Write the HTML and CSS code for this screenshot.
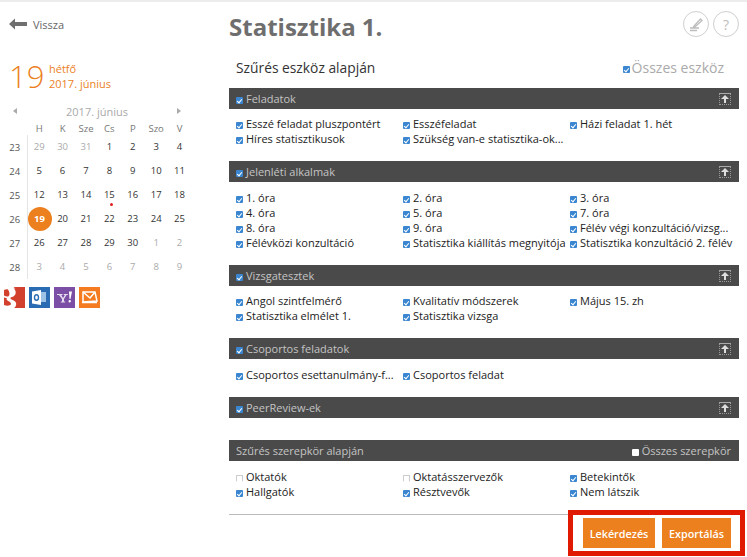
FILE: index.html
```html
<!DOCTYPE html>
<html lang="hu">
<head>
<meta charset="utf-8">
<title>Statisztika 1.</title>
<link rel="stylesheet" href="styles.css">
</head>
<body>
<div class="topstrip"></div>
<div class="page">
  <aside class="side">
    <a class="back">
      <svg width="18" height="12" viewBox="0 0 18 12"><path d="M0 6 L6 0.5 V4 H18 V8 H6 V11.5 Z" fill="#6f6f6f"/></svg>
      <span>Vissza</span>
    </a>
    <div class="today">
      <div class="today-num">19</div>
      <div class="today-txt"><div>hétfő</div><div>2017. június</div></div>
    </div>
    <div class="cal-title">
      <span class="tri-l"></span><span>2017. június</span><span class="tri-r"></span>
    </div>
    <div class="cal">
      <span></span><b>H</b><b>K</b><b>Sze</b><b>Cs</b><b>P</b><b>Szo</b><b>V</b>
      <i>23</i><span class="o">29</span><span class="o">30</span><span class="o">31</span><span>1</span><span>2</span><span>3</span><span>4</span>
      <i>24</i><span>5</span><span>6</span><span>7</span><span>8</span><span>9</span><span>10</span><span>11</span>
      <i>25</i><span>12</span><span>13</span><span>14</span><span class="ev">15</span><span>16</span><span>17</span><span>18</span>
      <i>26</i><span class="cur"><em>19</em></span><span>20</span><span>21</span><span>22</span><span>23</span><span>24</span><span>25</span>
      <i>27</i><span>26</span><span>27</span><span>28</span><span>29</span><span>30</span><span class="o">1</span><span class="o">2</span>
      <i>28</i><span class="o">3</span><span class="o">4</span><span class="o">5</span><span class="o">6</span><span class="o">7</span><span class="o">8</span><span class="o">9</span>
    </div>
    <div class="apps">
      <div class="app g"><svg width="21" height="21" viewBox="0 0 21 21"><path d="M0 0h9.500l2 1.500H9.500c1.600 1 2.200 2.400 2.200 4 0 3-2.600 4.400-4.500 4.800-1 .3-1 1.400 0 1.900 2 1.100 5 2 5 4.800 0 1.500-.7 3-2.200 4H0v-3c2.500 1 6.500 1 7-1 .2-1.500-2-2.700-3.500-3.500-1.500-.9-1-2-.5-2.500-1.300 0-3-.4-3-.8V8.500c1.500 1 3.800 1.500 4.800.5 1.200-1.300.8-4.500-.8-6.500C3.600 2 1.500 2 0 3z" fill="#fff"/></svg></div>
      <div class="app ol"><svg width="21" height="21" viewBox="0 0 21 21"><path d="M11 5h6v10h-6z" fill="#9cc3e6"/><path d="M3 4.500 12 3v15l-9-1.500z" fill="#fff"/><ellipse cx="7.500" cy="10.500" rx="2" ry="2.800" fill="none" stroke="#2a6cb3" stroke-width="1.400"/></svg></div>
      <div class="app y"><svg width="21" height="21" viewBox="0 0 21 21"><path d="M3 7h5.500v1H7.300l1.700 3 1.800-3H9.800V7h4v1h-1.300L10 12v2.500h1.200v1H6.800v-1H8V12L5 8H3z" fill="#e4dcef"/><path d="M15 4.500h3l-1.500 7.500h-1zM15.800 13a1.200 1.200 0 1 1-.1 2.400 1.200 1.200 0 0 1 .1-2.400z" fill="#fff"/></svg></div>
      <div class="app m"><svg width="21" height="21" viewBox="0 0 21 21"><path d="M4 5h12l2 9-14 1z" fill="none" stroke="#fff" stroke-width="1.500"/><path d="M4 5l7 6 5-6" fill="none" stroke="#fff" stroke-width="1.500"/><path d="M3 15.500h15" stroke="#fff" stroke-width="1.500"/></svg></div>
    </div>
  </aside>

  <main class="main">
    <header class="head">
      <h1>Statisztika 1.</h1>
      <div class="round-btns">
        <span class="round"><svg width="18" height="18" viewBox="0 0 18 18"><path d="M7.500 10.500l6-6.500 1.500 1.500-6.500 6-2 .5zM3 13h9M3 15.500h7" fill="none" stroke="#bdbdbd" stroke-width="1.300"/></svg></span>
        <span class="round q">?</span>
      </div>
    </header>

    <div class="filter-head">
      <h2>Szűrés eszköz alapján</h2>
      <div class="all"><span class="cb"></span>Összes eszköz</div>
    </div>

    <section class="grp">
      <div class="bar"><span class="bar-l"><span class="cb"></span>Feladatok</span><span class="up"></span></div>
      <ul class="items">
        <li><span class="cb"></span>Esszé feladat pluszpontért</li>
        <li><span class="cb"></span>Esszéfeladat</li>
        <li><span class="cb"></span>Házi feladat 1. hét</li>
        <li><span class="cb"></span>Híres statisztikusok</li>
        <li><span class="cb"></span>Szükség van-e statisztika-ok...</li>
      </ul>
    </section>

    <section class="grp">
      <div class="bar"><span class="bar-l"><span class="cb"></span>Jelenléti alkalmak</span><span class="up"></span></div>
      <ul class="items items-low">
        <li><span class="cb"></span>1. óra</li>
        <li><span class="cb"></span>2. óra</li>
        <li><span class="cb"></span>3. óra</li>
        <li><span class="cb"></span>4. óra</li>
        <li><span class="cb"></span>5. óra</li>
        <li><span class="cb"></span>7. óra</li>
        <li><span class="cb"></span>8. óra</li>
        <li><span class="cb"></span>9. óra</li>
        <li><span class="cb"></span>Félév végi konzultáció/vizsg...</li>
        <li><span class="cb"></span>Félévközi konzultáció</li>
        <li><span class="cb"></span>Statisztika kiállítás megnyitója</li>
        <li><span class="cb"></span>Statisztika konzultáció 2. félév</li>
      </ul>
    </section>

    <section class="grp">
      <div class="bar"><span class="bar-l"><span class="cb"></span>Vizsgatesztek</span><span class="up"></span></div>
      <ul class="items">
        <li><span class="cb"></span>Angol szintfelmérő</li>
        <li><span class="cb"></span>Kvalitatív módszerek</li>
        <li><span class="cb"></span>Május 15. zh</li>
        <li><span class="cb"></span>Statisztika elmélet 1.</li>
        <li><span class="cb"></span>Statisztika vizsga</li>
      </ul>
    </section>

    <section class="grp">
      <div class="bar"><span class="bar-l"><span class="cb"></span>Csoportos feladatok</span><span class="up"></span></div>
      <ul class="items items-low">
        <li><span class="cb"></span>Csoportos esettanulmány-f...</li>
        <li><span class="cb"></span>Csoportos feladat</li>
      </ul>
    </section>

    <section class="grp grp-empty">
      <div class="bar"><span class="bar-l"><span class="cb"></span>PeerReview-ek</span><span class="up"></span></div>
    </section>

    <section class="grp grp-last">
      <div class="bar"><span class="bar-l">Szűrés szerepkör alapján</span><span class="bar-r"><span class="cb off"></span>Összes szerepkör</span></div>
      <ul class="items items-low">
        <li><span class="cb empty"></span>Oktatók</li>
        <li><span class="cb empty"></span>Oktatásszervezők</li>
        <li><span class="cb"></span>Betekintők</li>
        <li><span class="cb"></span>Hallgatók</li>
        <li><span class="cb"></span>Résztvevők</li>
        <li><span class="cb"></span>Nem látszik</li>
      </ul>
    </section>

    <footer class="foot">
      <div class="actions">
        <button class="btn btn-a">Lekérdezés</button>
        <button class="btn btn-b">Exportálás</button>
      </div>
      <div class="mark"></div>
    </footer>
  </main>
</div>
</body>
</html>
```
FILE: styles.css
```css
* { box-sizing: border-box; }
html, body { margin: 0; padding: 0; }
body {
  width: 747px;
  height: 557px;
  overflow: hidden;
  background: #fff;
  font-family: "Open Sans", sans-serif;
  color: #333;
}
.topstrip { height: 2px; background: #ececec; }
.page { display: flex; align-items: flex-start; }

/* Sidebar */
.side { width: 229px; flex: none; padding-left: 4px; }
.back {
  display: flex; align-items: center; gap: 6px;
  margin: 14px 0 0 5px; height: 16px;
  font-size: 11px; color: #666;
}
.today { display: flex; margin: 28px 0 0 5px; color: #ec7f1e; height: 32px; }
.today-num { font-size: 31px; line-height: 32px; width: 40px; font-weight: 300; }
.today-txt { font-size: 11px; line-height: 15px; }
.today-txt div:first-child { margin-top: 1px; }
.cal-title {
  display: flex; align-items: center; justify-content: space-between;
  width: 168px; margin: 10px 0 1px 9px; height: 18px;
  font-size: 11px; color: #aaa;
}
.tri-l, .tri-r { width: 0; height: 0; border-style: solid; border-color: transparent; border-width: 3.5px; }
.tri-l { border-right: 4px solid #aaa; border-left: 0; }
.tri-r { border-left: 4px solid #aaa; border-right: 0; }
.cal {
  display: grid;
  grid-template-columns: 23.5px repeat(7, 23.4px);
  grid-template-rows: 14px;
  grid-auto-rows: 24px;
  width: 190px;
  font-size: 9.5px;
  text-align: center;
}
.cal b { font-weight: 400; color: #777; height: 14px; line-height: 16px; }
.cal i { font-style: normal; color: #555; line-height: 25px; border-right: 1px solid #e4e4e4; padding-right: 1px; }
.cal span { color: #333; line-height: 24px; position: relative; }
.cal .o { color: #aaa; }
.cal .ev::after {
  content: ""; position: absolute; left: 12px; top: 20px;
  width: 3px; height: 3px; border-radius: 50%; background: #e02020;
}
.cal .cur em {
  display: block; font-style: normal; font-weight: 700; color: #fff;
  width: 24px; height: 24px; border-radius: 50%; background: #ec7f1e;
  line-height: 24px; margin: 0 auto;
}
.apps { display: flex; gap: 4px; margin-top: 8px; }
.app { width: 21px; height: 21px; flex: none; }
.app.g { background: #d2402e; }
.app.ol { background: #2a6cb3; }
.app.y { background: #7b4fa5; }
.app.m { background: #f47b20; }

/* Main */
.main { width: 510px; flex: none; }
.head { display: flex; justify-content: space-between; align-items: flex-start; height: 48px; }
h1 { margin: 8px 0 0; font-size: 24px; line-height: 34px; font-weight: 700; color: #6e6e6e; }
.round-btns { display: flex; gap: 4px; margin: 9px 0 0; }
.round {
  width: 26px; height: 26px; border: 1px solid #cfcfcf; border-radius: 50%;
  display: flex; align-items: center; justify-content: center;
  font-size: 14px; color: #bdbdbd;
}
.filter-head {
  display: flex; justify-content: space-between; align-items: center;
  height: 38px; padding: 0 15px 3px 7px;
}
h2 { margin: 0; font-size: 13.800px; font-weight: 400; color: #333; }
.all { font-size: 14px; color: #aaa; display: flex; align-items: center; }
.all .cb { margin-right: 2px; }

.bar {
  height: 21px; background: #4a4a4a; color: #c4c4c4;
  display: flex; justify-content: space-between; align-items: center;
  padding: 0 8px 0 7px; font-size: 11px;
}
.bar-l, .bar-r { display: flex; align-items: center; }
.up {
  position: relative; width: 12px; height: 12px;
  border: 1px dotted #999; border-top: 1px solid #aaa;
}
.up::before {
  content: ""; position: absolute; left: 1px; top: 1px;
  border: 4px solid transparent; border-top: 0; border-bottom: 4px solid #ddd;
}
.up::after {
  content: ""; position: absolute; left: 4px; top: 5px;
  width: 2px; height: 4px; background: #ddd;
}
.items {
  list-style: none; margin: 0; padding: 7px 0 15px 7px;
  display: grid; grid-template-columns: repeat(3, 167px);
  grid-auto-rows: 15px;
  font-size: 11px; line-height: 15px; color: #222;
}
.items-low { padding-top: 8px; }
.items li { display: flex; align-items: center; white-space: nowrap; }
.grp-empty { height: 43px; }
.grp-last .items { padding-bottom: 0; }
.cb {
  position: relative; flex: none;
  width: 7px; height: 7px; margin: 4px 3px 0 0;
  background: #3a86d0; border-radius: 1px;
}
.cb::after {
  content: ""; position: absolute; left: 2px; top: 1px;
  width: 2px; height: 4px;
  border: solid #fff; border-width: 0 1px 1px 0;
  transform: rotate(40deg);
}
.cb.off { background: #fff; }
.cb.off::after, .cb.empty::after { display: none; }
.cb.empty { background: #fff; border: 1px solid #ccc; border-bottom-color: #fff; }

.foot { position: relative; margin-top: 15px; border-top: 1px solid #bbb; height: 40px; }
.actions { display: flex; justify-content: flex-end; gap: 7px; padding: 3px 8px 0 0; }
.btn {
  height: 30px; border: 0; background: #ec7f1e; color: #fff; padding: 0;
  font: 600 10.800px "Open Sans", sans-serif;
}
.btn-a { width: 72px; }
.btn-b { width: 69px; }
.mark {
  position: absolute; right: -6px; top: -5px; width: 177px; height: 46px;
  border: 5px solid #e01a00; pointer-events: none;
}
```
